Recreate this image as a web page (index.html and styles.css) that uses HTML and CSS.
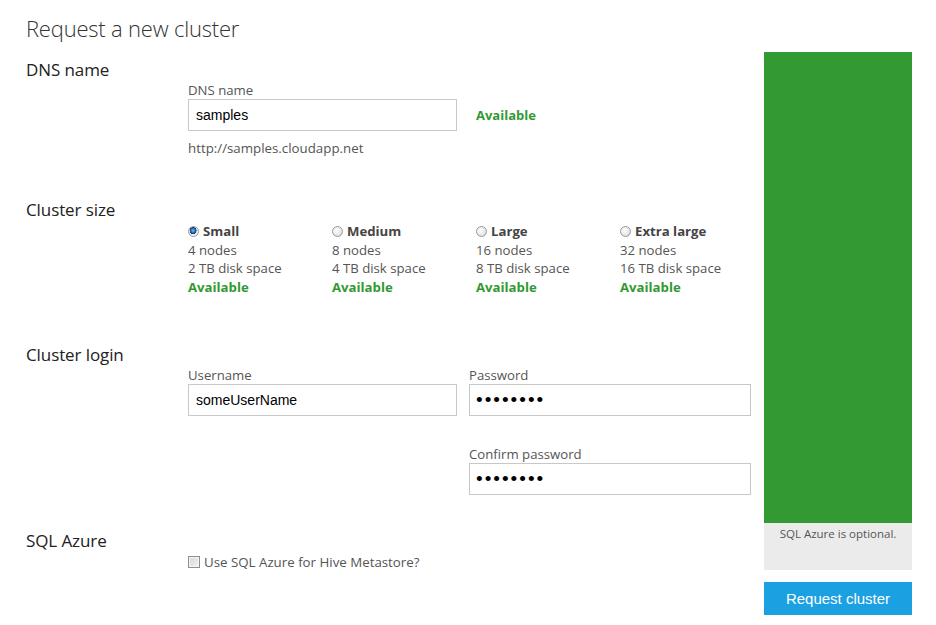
FILE: index.html
```html
<!DOCTYPE html>
<html lang="en">
<head>
<meta charset="utf-8">
<title>Request a new cluster</title>
<link rel="stylesheet" href="styles.css">
</head>
<body>
<div class="page">
  <h1 class="title">Request a new cluster</h1>
  <main class="main">
    <section class="section sec-dns">
      <h2 class="heading">DNS name</h2>
      <div class="content">
        <label class="field-label" for="dns">DNS name</label>
        <div class="dns-row">
          <input id="dns" class="text-input dns-input" type="text" value="samples">
          <span class="ok">Available</span>
        </div>
        <div class="url">http://samples.cloudapp.net</div>
      </div>
    </section>

    <section class="section sec-size">
      <h2 class="heading">Cluster size</h2>
      <div class="content sizes">
        <div class="size">
          <label class="size-name"><input type="radio" name="size" class="radio" checked> Small</label>
          <div class="line">4 nodes</div>
          <div class="line">2 TB disk space</div>
          <div class="ok line">Available</div>
        </div>
        <div class="size">
          <label class="size-name"><input type="radio" name="size" class="radio"> Medium</label>
          <div class="line">8 nodes</div>
          <div class="line">4 TB disk space</div>
          <div class="ok line">Available</div>
        </div>
        <div class="size">
          <label class="size-name"><input type="radio" name="size" class="radio"> Large</label>
          <div class="line">16 nodes</div>
          <div class="line">8 TB disk space</div>
          <div class="ok line">Available</div>
        </div>
        <div class="size">
          <label class="size-name"><input type="radio" name="size" class="radio"> Extra large</label>
          <div class="line">32 nodes</div>
          <div class="line">16 TB disk space</div>
          <div class="ok line">Available</div>
        </div>
      </div>
    </section>

    <section class="section sec-login">
      <h2 class="heading">Cluster login</h2>
      <div class="content login">
        <div class="field">
          <label class="field-label" for="user">Username</label>
          <input id="user" class="text-input" type="text" value="someUserName">
        </div>
        <div class="field">
          <label class="field-label" for="pw">Password</label>
          <input id="pw" class="text-input pw" type="password" value="password">
          <label class="field-label confirm-label" for="pw2">Confirm password</label>
          <input id="pw2" class="text-input pw" type="password" value="password">
        </div>
      </div>
    </section>

    <section class="section sec-sql">
      <h2 class="heading">SQL Azure</h2>
      <div class="content">
        <label class="check-row"><input type="checkbox" class="check"> Use SQL Azure for Hive Metastore?</label>
      </div>
    </section>
  </main>

  <aside class="aside">
    <div class="panel-green"></div>
    <div class="panel-note">SQL Azure is optional.</div>
    <button class="btn" type="button">Request cluster</button>
  </aside>
</div>
</body>
</html>
```

FILE: styles.css
```css
html, body {
  margin: 0;
  padding: 0;
  background: #ffffff;
}

body {
  font-family: "Open Sans", "Noto Sans", "DejaVu Sans", sans-serif;
  color: #555555;
}

.page {
  display: grid;
  grid-template-columns: 725px 148px;
  column-gap: 13px;
  padding: 13px 0 0 26px;
}

.title {
  grid-column: 1 / -1;
  margin: 0;
  font-size: 22px;
  font-weight: 300;
  line-height: 30px;
  color: #333333;
  letter-spacing: -0.2px;
}

.main {
  grid-column: 1;
  padding-top: 16px;
}

.aside {
  grid-column: 2;
  grid-row: 2;
  margin-top: 9px;
  display: flex;
  flex-direction: column;
}

.section {
  display: flex;
  flex-direction: column;
}

.heading {
  margin: 0;
  font-size: 17px;
  font-weight: 400;
  line-height: 22px;
  color: #222222;
  letter-spacing: -0.1px;
}

.content {
  margin-left: 162px;
  padding-top: 1px;
}

.field-label {
  display: block;
  font-size: 13.2px;
  line-height: 17px;
  color: #555555;
}

.text-input {
  display: block;
  box-sizing: border-box;
  height: 32px;
  border: 1px solid #c8c8c8;
  padding: 0 7px;
  font-family: "Liberation Sans", Arial, sans-serif;
  font-size: 14px;
  color: #000000;
  background: #ffffff;
  outline: none;
  margin: 0;
}

.dns-row {
  display: flex;
  align-items: center;
  gap: 19px;
}

.dns-input {
  width: 269px;
}

.ok {
  color: #339933;
  font-weight: 700;
  font-size: 13px;
}

.url {
  margin-top: 8px;
  font-size: 13.3px;
  line-height: 18px;
}

.sec-size {
  margin-top: 42px;
}

.sizes {
  display: grid;
  grid-template-columns: repeat(4, 144px);
}

.size-name {
  display: flex;
  align-items: center;
  gap: 4px;
  font-weight: 700;
  color: #444444;
}

.size-name, .line {
  font-size: 13.2px;
  line-height: 18.7px;
}

.radio {
  appearance: none;
  -webkit-appearance: none;
  margin: 0;
  width: 11px;
  height: 11px;
  border-radius: 50%;
  border: 1px solid #9a9a9a;
  background: radial-gradient(circle at 40% 35%, #ffffff 0%, #e9e9e9 55%, #cfcfcf 100%);
  box-sizing: border-box;
}

.radio:checked {
  background: radial-gradient(circle at 45% 40%, #7fc4f0 0%, #1f6bb0 30%, #0d3b6b 45%, #e6e6e6 50%, #f2f2f2 70%, #d4d4d4 100%);
}

.sec-login {
  margin-top: 47px;
}

.login {
  display: grid;
  grid-template-columns: 269px 282px;
  column-gap: 12px;
  align-items: start;
}

.login .text-input {
  width: 100%;
  height: 32px;
}

.pw {
  font-size: 19px;
  letter-spacing: 2px;
  padding-left: 6px;
}

.confirm-label {
  margin-top: 30px;
}

.sec-sql {
  margin-top: 35px;
}

.check-row {
  display: flex;
  align-items: center;
  gap: 4px;
  font-size: 13.3px;
  line-height: 18px;
}

.check {
  appearance: none;
  -webkit-appearance: none;
  margin: 0;
  width: 12px;
  height: 12px;
  box-sizing: border-box;
  border: 1px solid #8e8e8e;
  background: linear-gradient(135deg, #d6d6d6 0%, #f4f4f4 100%);
  box-shadow: inset 0 0 0 1px #f4f4f4;
}

.panel-green {
  height: 471px;
  background: #339933;
}

.panel-note {
  height: 47px;
  background: #ebebeb;
  text-align: center;
  font-size: 11.5px;
  line-height: 18px;
  padding-top: 2px;
  box-sizing: border-box;
  color: #555555;
}

.btn {
  margin-top: 12px;
  height: 33px;
  border: none;
  background: #1ba1e2;
  color: #ffffff;
  font-family: "Liberation Sans", Arial, sans-serif;
  font-size: 15px;
  padding: 0;
  cursor: pointer;
}
```
